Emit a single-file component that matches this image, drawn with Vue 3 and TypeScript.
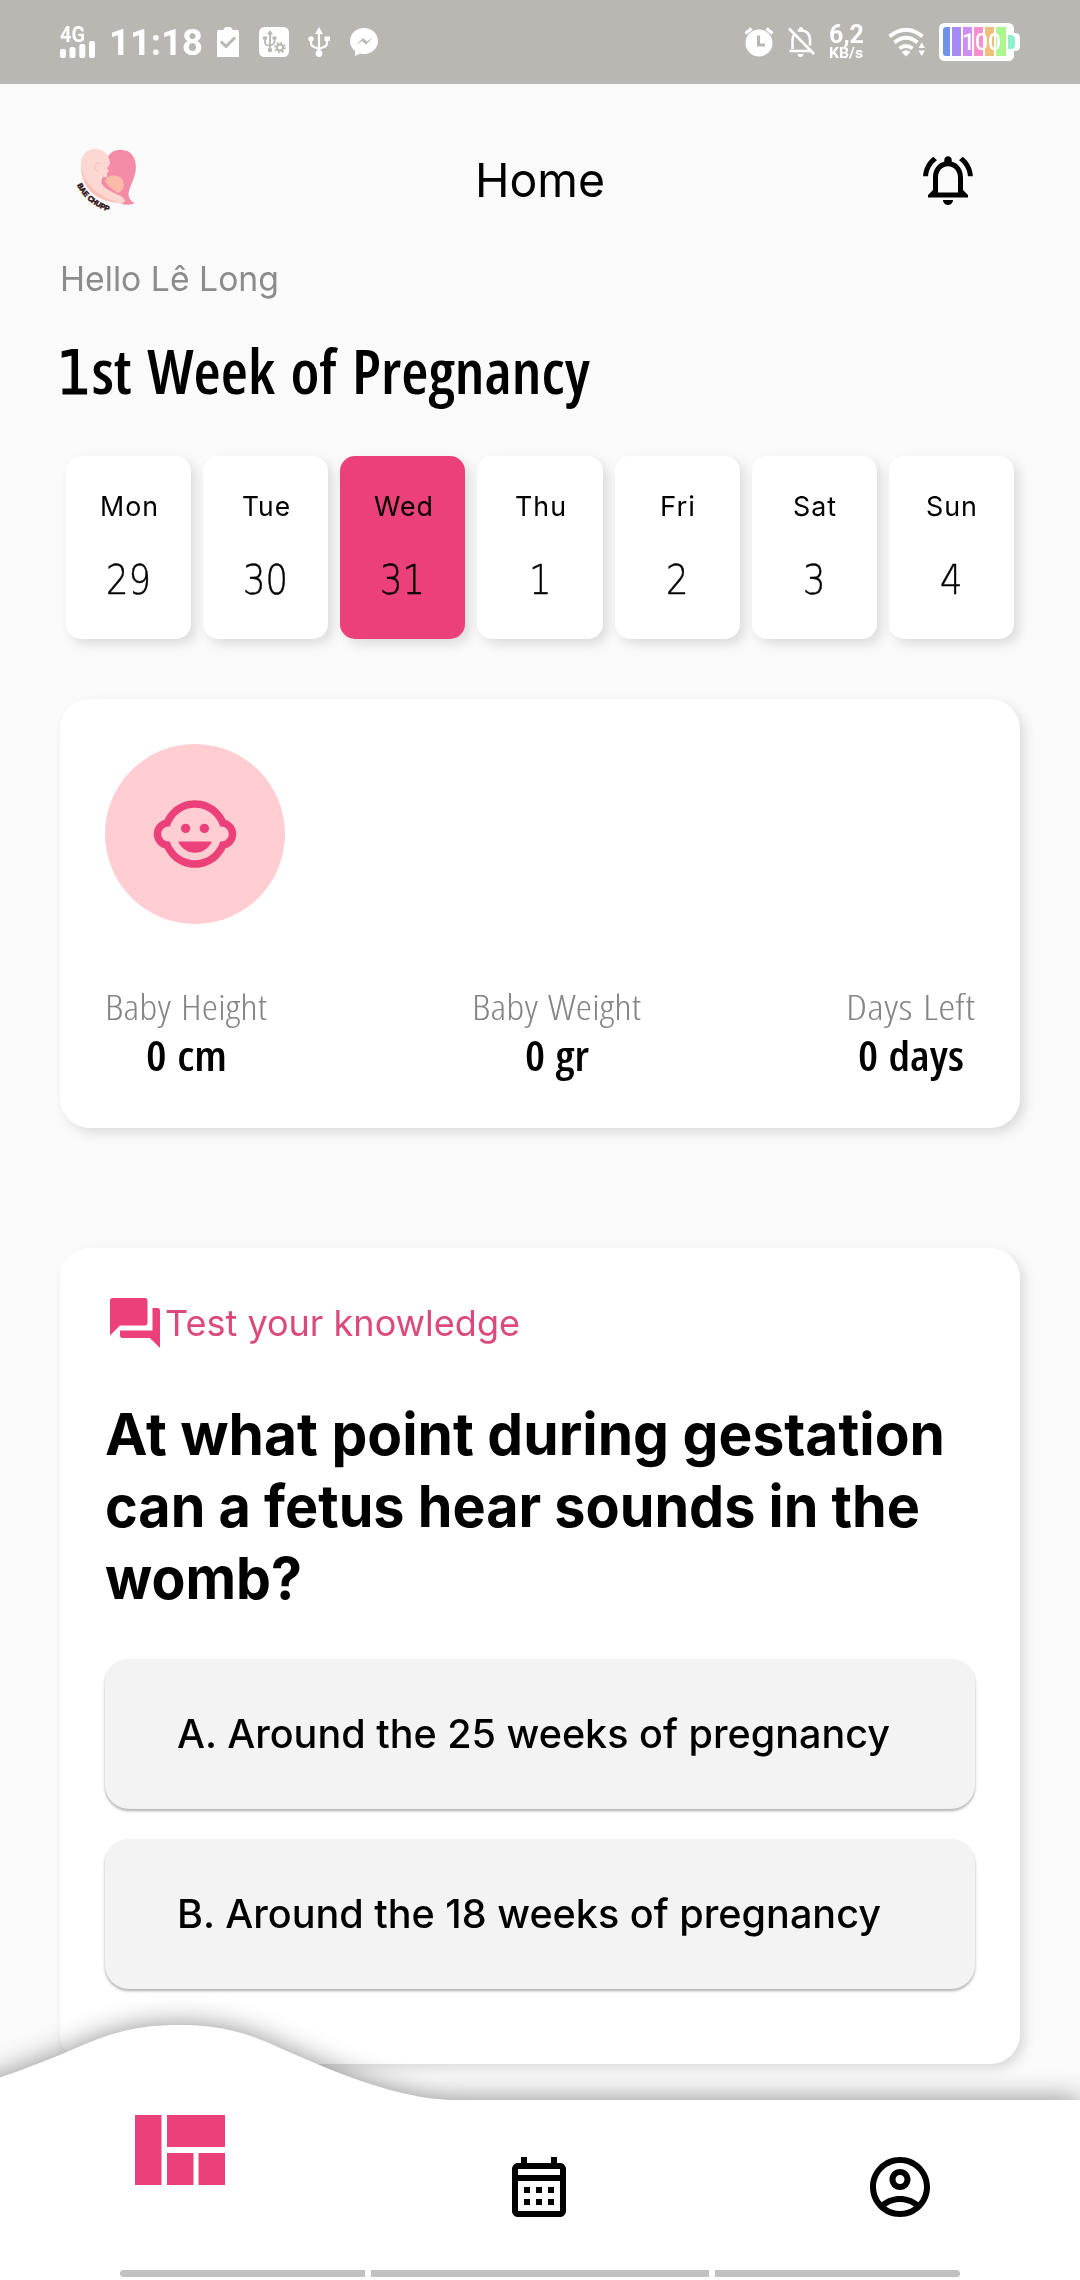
<script setup lang="ts">
import type { Directive } from 'vue'

interface Day { name: string; date: number; active?: boolean; width: number }
interface Stat { label: string; labelWidth: number; value: string; valueWidth: number }
interface Line { text: string; width: number }

const days: Day[] = [
  { name: 'Mon', date: 29, width: 59 },
  { name: 'Tue', date: 30, width: 49 },
  { name: 'Wed', date: 31, width: 60, active: true },
  { name: 'Thu', date: 1, width: 52 },
  { name: 'Fri', date: 2, width: 36 },
  { name: 'Sat', date: 3, width: 44 },
  { name: 'Sun', date: 4, width: 52 },
]

const stats: Stat[] = [
  { label: 'Baby Height', labelWidth: 162, value: '0 cm', valueWidth: 81 },
  { label: 'Baby Weight', labelWidth: 169, value: '0 gr', valueWidth: 64 },
  { label: 'Days Left', labelWidth: 129, value: '0 days', valueWidth: 106 },
]

const question: Line[] = [
  { text: 'At what point during gestation', width: 840 },
  { text: 'can a fetus hear sounds in the', width: 815 },
  { text: 'womb?', width: 197 },
]

const answers: Line[] = [
  { text: 'A. Around the 25 weeks of pregnancy', width: 713 },
  { text: 'B. Around the 18 weeks of pregnancy', width: 704 },
]

// Condenses or widens a single line of text so that it fills the given width.
const vFit: Directive<HTMLElement, number> = {
  mounted(el, { value }) {
    const natural = el.getBoundingClientRect().width
    el.style.transform = `scaleX(${value / natural})`
    el.style.marginRight = `${value - natural}px`
  },
}
</script>

<template>
  <div class="screen">
    <div class="status">
      <div class="signal">
        <span class="net"><span v-fit="25" class="fit">4G</span></span>
        <svg width="36" height="17" viewBox="0 0 36 17" fill="#fff">
          <rect x="0" y="8" width="6" height="9" rx="2" /><rect x="9.5" y="6" width="6" height="11" rx="2" />
          <rect x="19.3" y="3" width="6" height="14" rx="2" /><rect x="29" y="0" width="6" height="17" rx="2" />
        </svg>
      </div>
      <span class="clock"><span v-fit="94" class="fit">11:18</span></span>
      <svg class="s-clip" width="22" height="30" viewBox="0 0 22 30">
        <path d="M2 3h4.500q.5-3 3-3h3q2.500 0 3 3H20q2 0 2 2v25H0V5q0-2 2-2z" fill="#fff" />
        <path d="M4 14.500l5 5 9-9" fill="none" stroke="#b8b7b1" stroke-width="3" />
      </svg>
      <svg class="s-box" width="30" height="30" viewBox="0 0 30 30">
        <rect width="30" height="30" rx="5.500" fill="#fff" />
        <g fill="none" stroke="#b8b7b1" stroke-width="1.800">
          <path d="M11 6v17M6 11.500v4q0 2 2 2.500l3 1M15.500 11v4q0 2-2 2.500l-2.500 1" />
          <circle cx="21" cy="20.500" r="3.200" stroke-width="2.200" />
          <circle cx="21" cy="20.500" r="5" stroke-width="1.600" stroke-dasharray="1.900 2" />
        </g>
        <path d="M11 3l3 4.500H8zM4 9.500h4v3H4zM13.500 9.500h4v3h-4z" fill="#b8b7b1" />
        <circle cx="11" cy="23" r="2.200" fill="#b8b7b1" />
      </svg>
      <svg class="s-usb" width="22" height="30" viewBox="0 0 22 30">
        <path d="M11 4v21M3 12v4q0 3 3 4l5 2M19 12v4q0 3-3 4l-5 2" fill="none" stroke="#fff" stroke-width="2.200" />
        <path d="M11 0l4 7H7zM16.500 9.500H22V14h-5.500z" fill="#fff" />
        <circle cx="3" cy="12" r="2.700" fill="#fff" /><circle cx="11" cy="26.500" r="3.400" fill="#fff" />
      </svg>
      <svg class="s-msg" width="28" height="28" viewBox="0 0 28 28">
        <path d="M14 0C6 0 0 5.700 0 13c0 4.200 2 7.700 5 10v5l5-2.600q2 .6 4 .6c8 0 14-5.700 14-13S22 0 14 0z" fill="#fff" />
        <path d="M6 17l7-7 4 3.500 6-4-7 7-4-3.500z" fill="#b8b7b1" />
      </svg>
      <span class="grow"></span>
      <svg class="s-alarm" width="30" height="30" viewBox="0 0 30 30">
        <path d="M1.500 6.500l6-5M28.500 6.500l-6-5" stroke="#fff" stroke-width="3.400" />
        <circle cx="15" cy="16" r="13.500" fill="#fff" />
        <path d="M14.500 8.500v9.500h6.500" fill="none" stroke="#b8b7b1" stroke-width="3" />
      </svg>
      <svg class="s-mute" width="27" height="30" viewBox="0 0 27 30">
        <path d="M4.500 22V13q0-3.500 2-6M10 4q1-.5 3-.5 8.500 0 9 9v6" fill="none" stroke="#fff" stroke-width="2.600" />
        <path d="M1 1.500L26 27M1.500 24H23" fill="none" stroke="#fff" stroke-width="2.600" />
        <path d="M10.500 3q.5-3 2.500-3t2.500 3zM9.500 27h6q-.5 3-3 3t-3-3z" fill="#fff" />
      </svg>
      <div class="speed">
        <span class="rate"><span v-fit="35" class="fit">6,2</span></span>
        <span class="unit"><span v-fit="34" class="fit">KB/s</span></span>
      </div>
      <svg class="s-wifi" width="37" height="29" viewBox="0 0 37 29">
        <g fill="none" stroke="#fff" stroke-width="3.800">
          <path d="M1.500 8.500q16.500-13.500 33 0" /><path d="M6.500 14.500q11.500-9.500 23 0" /><path d="M11.500 20.500q6.500-5 13 0" />
        </g>
        <path d="M13.500 24q4.500-3.500 9 0L18 28.500zM30.500 20l3.200-5.500 3.200 5.500zM30.500 22.500l3.200 5.500 3.200-5.500z" fill="#fff" />
      </svg>
      <div class="battery">
        <svg width="82" height="38" viewBox="0 0 82 38">
          <path d="M6 0h63q6 0 6 6v4h1q5 0 5 5v8q0 5-5 5h-1v4q0 6-6 6H6q-6 0-6-6V6q0-6 6-6z" fill="#fff" />
          <path d="M7 4h4v29H7q-3 0-3-3V7q0-3 3-3z" fill="#7092e8" />
          <path d="M13 4h9v29h-9z" fill="#a78bf4" /><path d="M24 4h9v29h-9z" fill="#cf8df3" />
          <path d="M35 4h9v29h-9z" fill="#fa8fd0" /><path d="M46 4h9v29h-9z" fill="#efc07c" />
          <path d="M57 4h10v29H57z" fill="#adf68d" />
          <path d="M69 12h4q3 2 3 4v6q0 3-3 4h-4z" fill="#91efcb" />
        </svg>
        <span class="level"><span v-fit="39" class="fit">100</span></span>
      </div>
    </div>

    <header class="header">
      <svg class="logo" width="64" height="66" viewBox="76 147 64 66">
        <path d="M106 162C109 148 122 148 129 152C136 157 137 166 135 174C132 185 127 191 129 197Q131 202 135 203Q130 206 122 204L100 186Z" fill="#f48ca7" />
        <path d="M81 168C80 156 86 149 95 149C104 149 109 155 110 163Q109 167 107 168L109 171L107 173V177Q103 178 101 176C98 187 112 192 121 196C127 200 126 204 118 203C98 200 84 188 81 168Z" fill="#fdd7d2" />
        <path d="M81 166C84 186 102 198 120 203C97 202 81 189 81 166Z" fill="#fcc1b9" />
        <path d="M105 181C107 175 116 174 121 178C126 183 124 191 118 193Q109 188 105 181Z" fill="#fcbaa9" />
        <path d="M100 164q-4-2-5 2t3 5M112 183q3 0 3 3" fill="none" stroke="#f5b5ac" stroke-width=".8" />
        <path id="logo-arc" d="M77 185Q87 205 112 213" fill="none" />
        <text font-family="Liberation Sans, sans-serif" font-weight="700" font-size="7.500" fill="#2b0c0f" stroke="#2b0c0f" stroke-width=".5">
          <textPath href="#logo-arc" textLength="42" lengthAdjust="spacingAndGlyphs">BAE CHUPP</textPath>
        </text>
      </svg>
      <h1 class="home"><span v-fit="130" class="fit">Home</span></h1>
      <svg class="bell" width="60" height="60" viewBox="0 0 24 24">
        <path d="M12 22c1.100 0 2-.9 2-2h-4c0 1.100.9 2 2 2zm6-6v-5c0-3.070-1.630-5.640-4.500-6.320V4c0-.83-.67-1.500-1.500-1.500s-1.500.67-1.500 1.500v.68C7.640 5.360 6 7.920 6 11v5l-2 2v1h16v-1l-2-2zm-2 1H8v-6c0-2.480 1.510-4.500 4-4.500s4 2.020 4 4.500v6zM7.580 4.080L6.150 2.650C3.750 4.480 2.170 7.300 2.030 10.500h2c.15-2.650 1.510-4.970 3.550-6.420zm12.390 6.420h2c-.15-3.200-1.730-6.020-4.120-7.850l-1.420 1.430c2.020 1.450 3.390 3.770 3.540 6.420z" />
      </svg>
    </header>

    <main class="content">
      <p class="hello"><span v-fit="219" class="fit">Hello Lê Long</span></p>
      <h2 class="title"><span v-fit="530" class="fit"><span class="one">1</span>st Week of Pregnancy</span></h2>

      <div class="week">
        <div v-for="d in days" :key="d.name" class="day" :class="{ active: d.active }">
          <span class="name"><span v-fit="d.width" class="fit">{{ d.name }}</span></span>
          <span class="date"><span v-fit="d.date > 9 ? 45 : 22.500" class="fit">{{ d.date }}</span></span>
        </div>
      </div>

      <section class="card baby">
        <div class="avatar">
          <svg width="90" height="90" viewBox="0 0 24 24" fill="#ec407a">
            <circle cx="14.500" cy="10.500" r="1.250" /><circle cx="9.500" cy="10.500" r="1.250" />
            <path d="M7.500 14c.76 1.770 2.490 3 4.500 3s3.740-1.230 4.500-3h-9z" />
            <path d="M22.940 12.660c.04-.21.06-.43.06-.66s-.02-.45-.06-.66c-.25-1.510-1.360-2.740-2.810-3.170-.53-1.120-1.280-2.100-2.190-2.910C16.360 3.850 14.280 3 12 3s-4.360.85-5.940 2.260c-.92.81-1.670 1.800-2.190 2.910-1.450.43-2.560 1.650-2.810 3.170-.04.21-.06.43-.06.66s.02.45.06.66c.25 1.510 1.360 2.740 2.810 3.170.52 1.110 1.270 2.090 2.170 2.890C7.620 20.140 9.710 21 12 21s4.380-.86 5.970-2.280c.9-.8 1.650-1.790 2.170-2.890 1.440-.43 2.550-1.650 2.800-3.170zM19 14c-.1 0-.19-.02-.29-.03-.2.67-.49 1.290-.86 1.860C16.600 17.740 14.450 19 12 19s-4.600-1.260-5.850-3.170c-.37-.57-.66-1.190-.86-1.860-.1.01-.19.03-.29.03-1.100 0-2-.9-2-2s.9-2 2-2c.1 0 .19.02.29.03.2-.67.49-1.290.86-1.860C7.400 6.260 9.550 5 12 5s4.600 1.260 5.850 3.170c.37.57.66 1.190.86 1.860.1-.01.19-.03.29-.03 1.100 0 2 .9 2 2s-.9 2-2 2z" />
          </svg>
        </div>
        <div class="stats">
          <div v-for="s in stats" :key="s.label" class="stat">
            <span class="label"><span v-fit="s.labelWidth" class="fit">{{ s.label }}</span></span>
            <span class="value"><span v-fit="s.valueWidth" class="fit">{{ s.value }}</span></span>
          </div>
        </div>
      </section>

      <section class="card quiz">
        <div class="topic">
          <svg width="60" height="60" viewBox="0 0 24 24" fill="#ec407a">
            <path d="M21 6h-2v9H6v2c0 .55.45 1 1 1h11l4 4V7c0-.55-.45-1-1-1zm-4 6V3c0-.55-.45-1-1-1H3c-.55 0-1 .45-1 1v14l4-4h10c.55 0 1-.45 1-1z" />
          </svg>
          <span v-fit="355" class="fit">Test your knowledge</span>
        </div>
        <h3 class="question">
          <span v-for="l in question" :key="l.text" class="line"><span v-fit="l.width" class="fit">{{ l.text }}</span></span>
        </h3>
        <button v-for="a in answers" :key="a.text" class="answer"><span v-fit="a.width" class="fit">{{ a.text }}</span></button>
      </section>
    </main>

    <nav class="nav">
      <svg class="wave" width="1080" height="300" viewBox="0 1980 1080 300">
        <path d="M-40 2093L0 2077.500C25 2069 45 2061 69 2051C110 2033 135 2025 179 2025C225 2025 250 2034 289 2052C320 2065 395 2100 455 2100H1080V2300H-40Z" fill="#fff" />
      </svg>
      <div class="tabs">
        <svg class="tab-home" width="90" height="70" viewBox="0 0 90 70" fill="#ec407a">
          <path d="M0 0h26.500v70H0zM32 0h58v32H32zM32 38h26.500v32H32zM63.500 38H90v32H63.500z" />
        </svg>
        <svg class="tab tab-calendar" width="72" height="72" viewBox="0 0 24 24">
          <path d="M19 4h-1V2h-2v2H8V2H6v2H5c-1.110 0-1.990.9-1.990 2L3 20c0 1.100.89 2 2 2h14c1.100 0 2-.9 2-2V6c0-1.100-.9-2-2-2zm0 16H5V10h14v10zm0-12H5V6h14v2zM9 14H7v-2h2v2zm4 0h-2v-2h2v2zm4 0h-2v-2h2v2zm-8 4H7v-2h2v2zm4 0h-2v-2h2v2zm4 0h-2v-2h2v2z" />
        </svg>
        <svg class="tab" width="72" height="72" viewBox="0 0 24 24">
          <path d="M12 2C6.480 2 2 6.480 2 12s4.480 10 10 10 10-4.480 10-10S17.520 2 12 2zM7.350 18.500C8.660 17.560 10.260 17 12 17s3.340.56 4.650 1.500C15.340 19.440 13.740 20 12 20s-3.340-.56-4.650-1.500zm10.790-1.380C16.450 15.800 14.320 15 12 15s-4.450.8-6.140 2.120C4.700 15.730 4 13.950 4 12c0-4.420 3.580-8 8-8s8 3.580 8 8c0 1.950-.7 3.730-1.860 5.120zM12 6c-1.930 0-3.500 1.570-3.500 3.500S10.070 13 12 13s3.500-1.570 3.500-3.500S13.930 6 12 6zm0 5c-.83 0-1.500-.67-1.500-1.500S11.170 8 12 8s1.500.67 1.500 1.500S12.830 11 12 11z" />
        </svg>
      </div>
      <div class="gesture"><i></i><i></i><i></i></div>
    </nav>
  </div>
</template>

<style>
body { margin: 0; background: #fafafa; }
</style>

<style scoped>
.screen { position: relative; width: 1080px; height: 2280px; overflow: hidden; background: #fafafa; color: #000; font-family: Inter, "Open Sans", sans-serif; }
svg { display: block; flex: none; }
h1, h2, h3, p { margin: 0; font-weight: 400; }
.fit { display: inline-block; white-space: nowrap; transform-origin: 0 50%; }

.status { display: flex; align-items: center; box-sizing: border-box; height: 84px; padding: 0 59px 0 60px; background: #b8b7b1; color: #fff; font-family: Roboto, sans-serif; font-weight: 700; }
.signal { display: flex; flex-direction: column; width: 36px; height: 31px; }
.net { font-size: 21.500px; line-height: 16px; height: 14px; }
.clock { margin-left: 13px; font-size: 36.500px; line-height: 40px; padding-top: 2px; }
.s-clip { margin-left: 14px; }
.s-box { margin-left: 19.500px; }
.s-usb { margin-left: 19px; }
.s-msg { margin-left: 20px; }
.grow { flex: 1; }
.s-mute { margin-left: 14px; }
.speed { display: flex; flex-direction: column; width: 34px; margin-left: 14px; height: 38px; }
.rate { font-size: 25px; line-height: 23px; }
.unit { font-size: 14.500px; line-height: 15px; }
.s-wifi { margin-left: 25px; }
.battery { position: relative; margin-left: 14px; width: 82px; height: 38px; }
.level { position: absolute; left: 23px; top: 6px; font-size: 24px; line-height: 26px; font-weight: 500; }

.header { display: flex; align-items: center; justify-content: space-between; padding: 66px 102px 0 76px; height: 60px; }
.home { font-size: 47px; line-height: 60px; margin-left: 21px; }

.content { padding: 48px 60px 0; }
.hello { height: 41px; color: #8c8c8c; font-size: 34.500px; line-height: 41px; }
.title { height: 80px; margin-top: 32px; font-family: "Open Sans", sans-serif; font-size: 61px; line-height: 80px; font-weight: 550; font-stretch: 75%; word-spacing: 4px; }
.one { margin-left: -4px; font-family: "DejaVu Sans Condensed", "DejaVu Sans", sans-serif; font-weight: 400; line-height: 0; -webkit-text-stroke: 1px #000; }

.week { display: flex; gap: 12px; margin-top: 45px; padding: 0 6px; }
.day { flex: 1; height: 183px; border-radius: 15px; background: #fff; box-shadow: 5px 5px 12px rgba(0, 0, 0, .12); display: flex; flex-direction: column; align-items: center; }
.day.active { background: #ec407a; }
.name { margin-top: 30px; padding-left: 1.500px; font-size: 27.500px; line-height: 40px; letter-spacing: 1px; }
.date { margin-top: 29px; font-family: "DejaVu Sans Light", "DejaVu Sans", sans-serif; font-weight: 200; font-size: 41px; line-height: 50px; -webkit-text-stroke: .5px #000; }

.card { box-sizing: border-box; background: #fff; border-radius: 30px; box-shadow: 5px 5px 12px rgba(0, 0, 0, .12); }
.baby { margin-top: 60px; height: 429px; padding: 45px; }
.avatar { display: flex; align-items: center; justify-content: center; width: 180px; height: 180px; border-radius: 50%; background: #ffcdd2; }
.stats { display: flex; justify-content: space-between; margin-top: 61px; font-family: "Open Sans", sans-serif; font-stretch: 75%; word-spacing: 2px; }
.stat { display: flex; flex-direction: column; align-items: center; }
.label { font-size: 34px; line-height: 44px; font-weight: 300; color: #848484; }
.value { margin-top: 1px; font-size: 42px; line-height: 50px; font-weight: 600; }

.quiz { margin-top: 120px; height: 816px; padding: 45px; }
.topic { display: flex; align-items: center; font-size: 36px; line-height: 60px; color: #dc4a7d; }
.question { margin-top: 45px; font-weight: 650; font-size: 58px; line-height: 72px; }
.line { display: block; height: 72px; }
.answer { display: flex; align-items: center; width: 100%; height: 150px; margin-top: 30px; padding: 0 0 0 72px; border: 0; border-radius: 24px; background: #f3f3f3; box-shadow: 0 2px 3px rgba(0, 0, 0, .32); color: #000; font: 500 39.500px Inter, sans-serif; }
.question + .answer { margin-top: 45px; }

.nav { position: absolute; left: 0; bottom: 0; width: 1080px; height: 300px; }
.wave { position: absolute; inset: 0; overflow: visible; filter: drop-shadow(0 0 14px rgba(0, 0, 0, .45)); }
.tabs { position: relative; display: flex; padding: 135px 144px 0 135px; height: 155px; justify-content: space-between; }
.tab { margin-top: 36px; }
.tab-calendar { margin-right: 12px; }
.gesture { position: relative; display: flex; gap: 6px; padding: 0 120px; }
.gesture i { height: 7px; width: 245px; background: #c1c1c1; }
.gesture i:nth-child(2) { flex: 1; }
.gesture i:first-child { border-radius: 4px 0 0 4px; }
.gesture i:last-child { border-radius: 0 4px 4px 0; }
</style>
